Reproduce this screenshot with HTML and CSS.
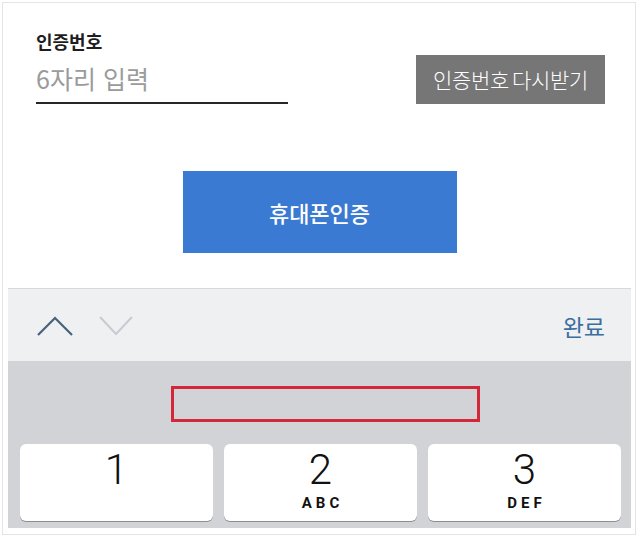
FILE: index.html
```html
<!DOCTYPE html>
<html lang="ko">
<head>
<meta charset="utf-8">
<link rel="stylesheet" href="styles.css">
</head>
<body>
<div class="frame">
  <div class="screen">
    <div class="top">
      <div class="form-row">
        <div class="field">
          <div class="label">인증번호</div>
          <div class="input">6자리 입력</div>
        </div>
        <div class="resend">인증번호<span class="tight"> </span>다시받기</div>
      </div>
      <div class="verify">휴대폰인증</div>
    </div>
    <div class="keyboard">
      <div class="bar">
        <div class="arrows">
          <svg class="chev" width="36" height="20" viewBox="0 0 36 20"><path d="M1 19 L18 2 L35 19" fill="none" stroke="#46627e" stroke-width="2.2"/></svg>
          <svg class="chev" width="34" height="20" viewBox="0 0 34 20"><path d="M1 1 L17 18 L33 1" fill="none" stroke="#c7ccd2" stroke-width="2"/></svg>
        </div>
        <div class="done">완료</div>
      </div>
      <div class="pad">
        <div class="highlight"></div>
        <div class="keys">
          <div class="key"><span class="num">1</span><span class="letters">&nbsp;</span></div>
          <div class="key"><span class="num">2</span><span class="letters">ABC</span></div>
          <div class="key"><span class="num">3</span><span class="letters">DEF</span></div>
        </div>
      </div>
    </div>
  </div>
</div>
</body>
</html>
```

FILE: styles.css
```css
html, body {
  margin: 0;
  padding: 0;
  background: #ffffff;
}
body {
  font-family: "Noto Sans CJK KR", "Noto Sans", sans-serif;
}
.frame {
  margin: 2px;
  border: 1px solid #e4e4e4;
  padding: 0 4px 6px 5px;
  box-sizing: content-box;
  width: 623px;
  height: 525px;
  display: flex;
  flex-direction: column;
}
.screen {
  flex: 1;
  display: flex;
  flex-direction: column;
  background: #fff;
}
.top {
  height: 285px;
  display: flex;
  flex-direction: column;
  align-items: center;
  padding-top: 26px;
  box-sizing: border-box;
}
.form-row {
  align-self: stretch;
  display: flex;
  justify-content: space-between;
  align-items: flex-end;
  padding: 0 26px 0 28px;
}
.field {
  width: 252px;
}
.label {
  font-size: 18px;
  line-height: 24px;
  font-weight: 700;
  color: #1e1e1e;
}
.input {
  margin-top: 5px;
  height: 44px;
  line-height: 40px;
  font-size: 25px;
  color: #9b9b9b;
  border-bottom: 2px solid #262626;
  box-sizing: content-box;
}
.resend {
  width: 189px;
  height: 49px;
  background: #767676;
  color: #fff;
  font-size: 21px;
  font-weight: 300;
  line-height: 49px;
  text-align: center;
  letter-spacing: -0.3px;
}
.tight {
  letter-spacing: -3px;
}
.verify {
  margin-top: 67px;
  width: 274px;
  height: 82px;
  background: #3a7ad3;
  color: #fff;
  font-size: 22px;
  font-weight: 500;
  line-height: 82px;
  text-align: center;
}
.keyboard {
  border-top: 1px solid #d9d9d9;
  display: flex;
  flex-direction: column;
}
.bar {
  height: 72px;
  background: #eff0f2;
  display: flex;
  align-items: center;
  justify-content: space-between;
  padding: 0 26px 0 29px;
}
.arrows {
  display: flex;
  gap: 26px;
  align-items: center;
  margin-top: 1px;
}
.chev {
  display: block;
}
.done {
  font-size: 23px;
  color: #3b6d9e;
  line-height: 26px;
  margin-top: 1px;
}
.pad {
  height: 167px;
  background: #d1d3d7;
  padding-top: 25px;
  box-sizing: border-box;
  display: flex;
  flex-direction: column;
}
.highlight {
  margin-left: 163px;
  width: 309px;
  height: 36px;
  border: 3px solid #d2283a;
  box-sizing: border-box;
}
.keys {
  margin-top: 22px;
  display: grid;
  grid-template-columns: repeat(3, 1fr);
  gap: 11px;
  padding: 0 10px 0 12px;
}
.key {
  height: 77px;
  background: #fff;
  border-radius: 6px;
  box-shadow: 0 1px 0 #8c8e92;
  display: flex;
  flex-direction: column;
  align-items: center;
  font-family: "Roboto", "Liberation Sans", sans-serif;
  color: #111;
}
.num {
  font-size: 42px;
  font-weight: 300;
  line-height: 44px;
  margin-top: 4px;
}
.letters {
  font-size: 15px;
  font-weight: 700;
  letter-spacing: 4px;
  padding-left: 4px;
  line-height: 18px;
  margin-top: 2px;
}
```
